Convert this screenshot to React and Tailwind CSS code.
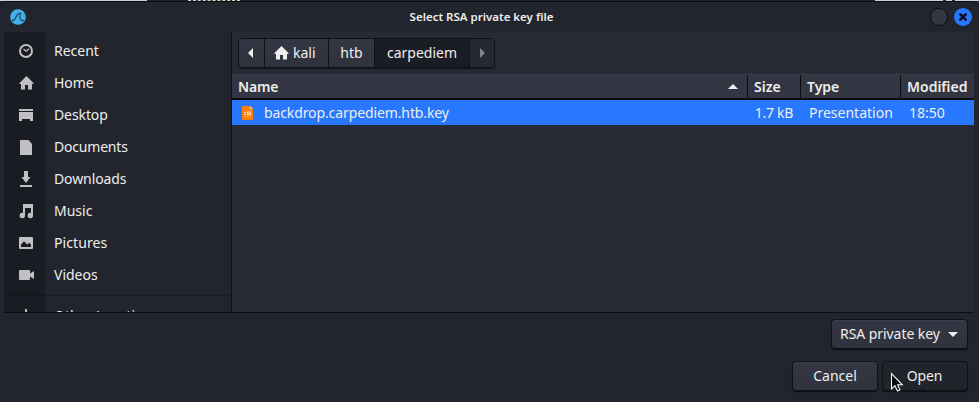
import React from 'react';

const places = [
  ['Recent', 'recent', ''],
  ['Home', 'home', 'tracking-[-0.1px]'],
  ['Desktop', 'desktop', 'tracking-[-0.1px]'],
  ['Documents', 'document', 'tracking-[-0.2px]'],
  ['Downloads', 'download', 'tracking-[-0.1px]'],
  ['Music', 'music', ''],
  ['Pictures', 'picture', 'tracking-[0.1px]'],
  ['Videos', 'video', ''],
];

function Icon({ name, className = '' }) {
  const shapes = {
    recent: (
      <g fill="none" stroke="currentColor">
        <circle cx="8" cy="8" r="6" strokeWidth="2" />
        <path d="M5.500 6l2.500 2.200L11 5.700" strokeWidth="1.300" />
      </g>
    ),
    home: <path d="M8.500 1L1.500 8v1H3v5.500h4V10h3v4.500h4V9h1.500V8z" />,
    desktop: <path d="M1 2h14v2H1zM1 5h14v9h-3v-2H4v2H1z" />,
    document: <path d="M2.500 1h8L14 5v11H2.500A.5.5 0 0 1 2 15.500v-14a.5.5 0 0 1 .5-.5z" />,
    download: <path d="M6 0h4v6h2.500L8 12 3.500 6H6zM2 14h12v2H2z" />,
    music: <path d="M5 1h10v11.500a2.700 2.700 0 1 1-2-2.600V5H7v7.500a2.700 2.700 0 1 1-2-2.600z" />,
    picture: <path fillRule="evenodd" d="M2 2h12a1 1 0 0 1 1 1v10a1 1 0 0 1-1 1H2a1 1 0 0 1-1-1V3a1 1 0 0 1 1-1zm1 10h10V9.500L11 7.800 9.300 9.500 6 6.200 3 9.500z" />,
    video: <path d="M2 3h9a1 1 0 0 1 1 1v2.500L16 4v8l-4-2.500V12a1 1 0 0 1-1 1H2a1 1 0 0 1-1-1V4a1 1 0 0 1 1-1z" />,
    plus: <path d="M7 1h2v6h6v2H9v6H7V9H1V7h6z" />,
  };
  return (
    <svg viewBox="0 0 16 16" width="16" height="16" fill="currentColor" className={`shrink-0 ${className}`}>
      {shapes[name]}
    </svg>
  );
}

function Place({ label, icon, tracking = '' }) {
  return (
    <div className="flex h-8 shrink-0 items-center">
      <div className="flex w-[41px] shrink-0 justify-center pl-[3px] text-[#c0c0c2]">
        <Icon name={icon} />
      </div>
      <span className={`pl-[9px] ${tracking}`}>{label}</span>
    </div>
  );
}

const raised = 'border border-[#101116] bg-[linear-gradient(#343743,#30333e)] shadow-[0_1px_1px_#0d0e12,inset_0_1px_0_#3c3f4b]';

export default function App() {
  return (
    <div className="relative flex h-[402px] w-[979px] flex-col overflow-hidden bg-[#23252e] font-['Noto_Sans',sans-serif] text-[14px] leading-5 text-[#eeeeec]">
      <div className="flex h-px shrink-0 bg-[#22242c]">
        <div className="w-[147px] bg-[#c9cce0]" />
        <div className="grow pl-[41px]">
          <div className="w-[52px] border-t border-dashed border-[#d5d2cc]" />
        </div>
        <div className="flex w-[104px]">
          <div className="w-[68px] bg-[#c9cce0]" />
          <div className="w-[3px] bg-[#15324a]" />
          <div className="w-[6px] bg-[#c9cce0]" />
          <div className="w-[3px] bg-[#332823]" />
          <div className="grow bg-[#c9cce0]" />
        </div>
      </div>
      <header className="flex h-[31px] shrink-0 items-center rounded-t-lg border-t border-[#0c0d11] pr-[7px] pl-[10px]">
        <svg width="16" height="16" viewBox="0 0 16 16" className="shrink-0">
          <circle cx="8" cy="8" r="7.800" fill="#44aee8" />
          <path d="M2 11.500h1.500C6 11 5.500 4.500 10.500 4.200 9.500 7 10 11 11.500 11.500H14" fill="none" stroke="#1c4964" strokeWidth="1.300" />
        </svg>
        <h1 className="grow pl-[7px] text-center text-[11.5px] font-semibold">Select RSA private key file</h1>
        <div className="flex gap-[6px]">
          <div className="size-[18px] rounded-full border border-[#0c0d11] bg-[#353843]" />
          <div className="flex size-[18px] items-center justify-center rounded-full bg-[#2777ff]">
            <svg width="8" height="8" viewBox="0 0 8 8">
              <path d="M.5.5l7 7M7.500.5l-7 7" stroke="#0c1020" strokeWidth="2.600" />
            </svg>
          </div>
        </div>
      </header>

      <main className="mr-[5px] ml-1 flex h-[281px] shrink-0 border-b border-[#0e0f13]">
        <aside className="flex w-[228px] shrink-0 flex-col overflow-hidden border-r border-[#0e0f13] bg-[linear-gradient(90deg,#1a1c23_41px,#23252e_41px)] pt-[3px]">
          {places.map(([label, icon, tracking]) => (
            <Place key={label} label={label} icon={icon} tracking={tracking} />
          ))}
          <div className="mt-[4px] h-px shrink-0 bg-black/20" />
          <div className="mt-[4px] flex flex-col">
            <Place label="Other Locations" icon="plus" />
          </div>
        </aside>

        <section className="flex min-w-0 grow flex-col bg-[#272a34]">
          <nav className="flex h-[42px] shrink-0 items-start pt-[6px] pl-[6px]">
            <div className="flex h-[30px] overflow-hidden rounded-[4px] border border-[#101116] bg-[linear-gradient(#343743,#30333e)] shadow-[0_1px_1px_#15161b]">
              <div className="flex w-[26px] items-center justify-center border-r border-[#101116] pr-[2px]">
                <svg width="5" height="10" viewBox="0 0 5 10"><path d="M5 0v10L0 5z" fill="#eeeeec" /></svg>
              </div>
              <div className="flex w-16 items-center gap-[4px] border-r border-[#101116] pl-[8px]">
                <Icon name="home" />
                <span>kali</span>
              </div>
              <div className="flex w-[46px] items-center justify-center border-r border-[#101116]">htb</div>
              <div className="flex w-[95px] items-center justify-center border-r border-[#101116] bg-[#1b1d24]">carpediem</div>
              <div className="flex w-6 items-center justify-center bg-[#262932]">
                <svg width="5" height="10" viewBox="0 0 5 10"><path d="M0 0v10l5-5z" fill="#83858a" /></svg>
              </div>
            </div>
          </nav>

          <div className="flex h-[26px] shrink-0 border-t border-b-2 border-t-[#3b3e4a] border-b-[#0b0c10] bg-[#333642] font-semibold">
            <div className="flex w-[516px] items-center justify-between border-r border-[#0b0c10] pr-[9px] pl-[6px]">
              <span className="tracking-[-0.2px]">Name</span>
              <svg width="10" height="5" viewBox="0 0 10 5"><path d="M0 5h10L5 0z" fill="#eeeeec" /></svg>
            </div>
            <div className="flex w-[53px] items-center border-r border-[#0b0c10] pl-[6px]">Size</div>
            <div className="flex w-[100px] items-center border-r border-[#0b0c10] pl-[6px]">Type</div>
            <div className="flex grow items-center pl-[6px]">Modified</div>
          </div>

          <div className="flex h-[25px] shrink-0 items-center bg-[#2777ff]">
            <div className="flex w-[516px] items-center gap-[10px] pl-[10px]">
              <svg width="12" height="14" viewBox="0 0 12 14">
                <path d="M1 0h7l3 3v10a1 1 0 0 1-1 1H1a1 1 0 0 1-1-1V1a1 1 0 0 1 1-1z" fill="#ff7f0a" />
                <path d="M8 0v3h3z" fill="#ffc285" />
                <path d="M2 6h2v1H2zM2 8h2v1H2zM5 5.500h4V9H5z" fill="#ffe4c8" />
                <path d="M2.500 10.500h6v.7h-6z" fill="#ffc285" />
                <path d="M6 6.500l1 1.300L8 6" fill="none" stroke="#ff7f0a" strokeWidth=".8" />
              </svg>
              <span className="tracking-[-0.11px]">backdrop.carpediem.htb.key</span>
            </div>
            <div className="w-[45px] text-right tracking-[-0.3px]">1.7 kB</div>
            <div className="w-[116px] pl-4">Presentation</div>
            <div>18:50</div>
          </div>
        </section>
      </main>

      <footer className="flex flex-col items-end gap-3 pt-[6px] pr-[11px]">
        <div className={`flex h-[30px] w-[137px] items-center gap-2 rounded-[4px] pl-2 ${raised}`}>
          <span className="tracking-[-0.06px]">RSA private key</span>
          <svg width="10" height="5" viewBox="0 0 10 5"><path d="M0 0h10L5 5z" fill="#eeeeec" /></svg>
        </div>
        <div className="flex gap-1">
          <div className={`flex h-[30px] w-[86px] items-center justify-center rounded-[4px] ${raised}`}>Cancel</div>
          <div className="flex h-[30px] w-[86px] items-center justify-center rounded-[4px] border border-[#101116] bg-[#22242c] pr-px tracking-[-0.2px] shadow-[0_1px_1px_#0d0e12]">Open</div>
        </div>
      </footer>

      <svg className="absolute top-[372px] left-[890px]" width="14" height="21" viewBox="0 0 14 21">
        <path d="M1.500 1.500v15.500l3.500-3.300 2.500 5.300 2.500-1.200-2.400-5h4.700z" fill="#08090b" stroke="#f4f4f4" strokeWidth="1.100" />
      </svg>
    </div>
  );
}
